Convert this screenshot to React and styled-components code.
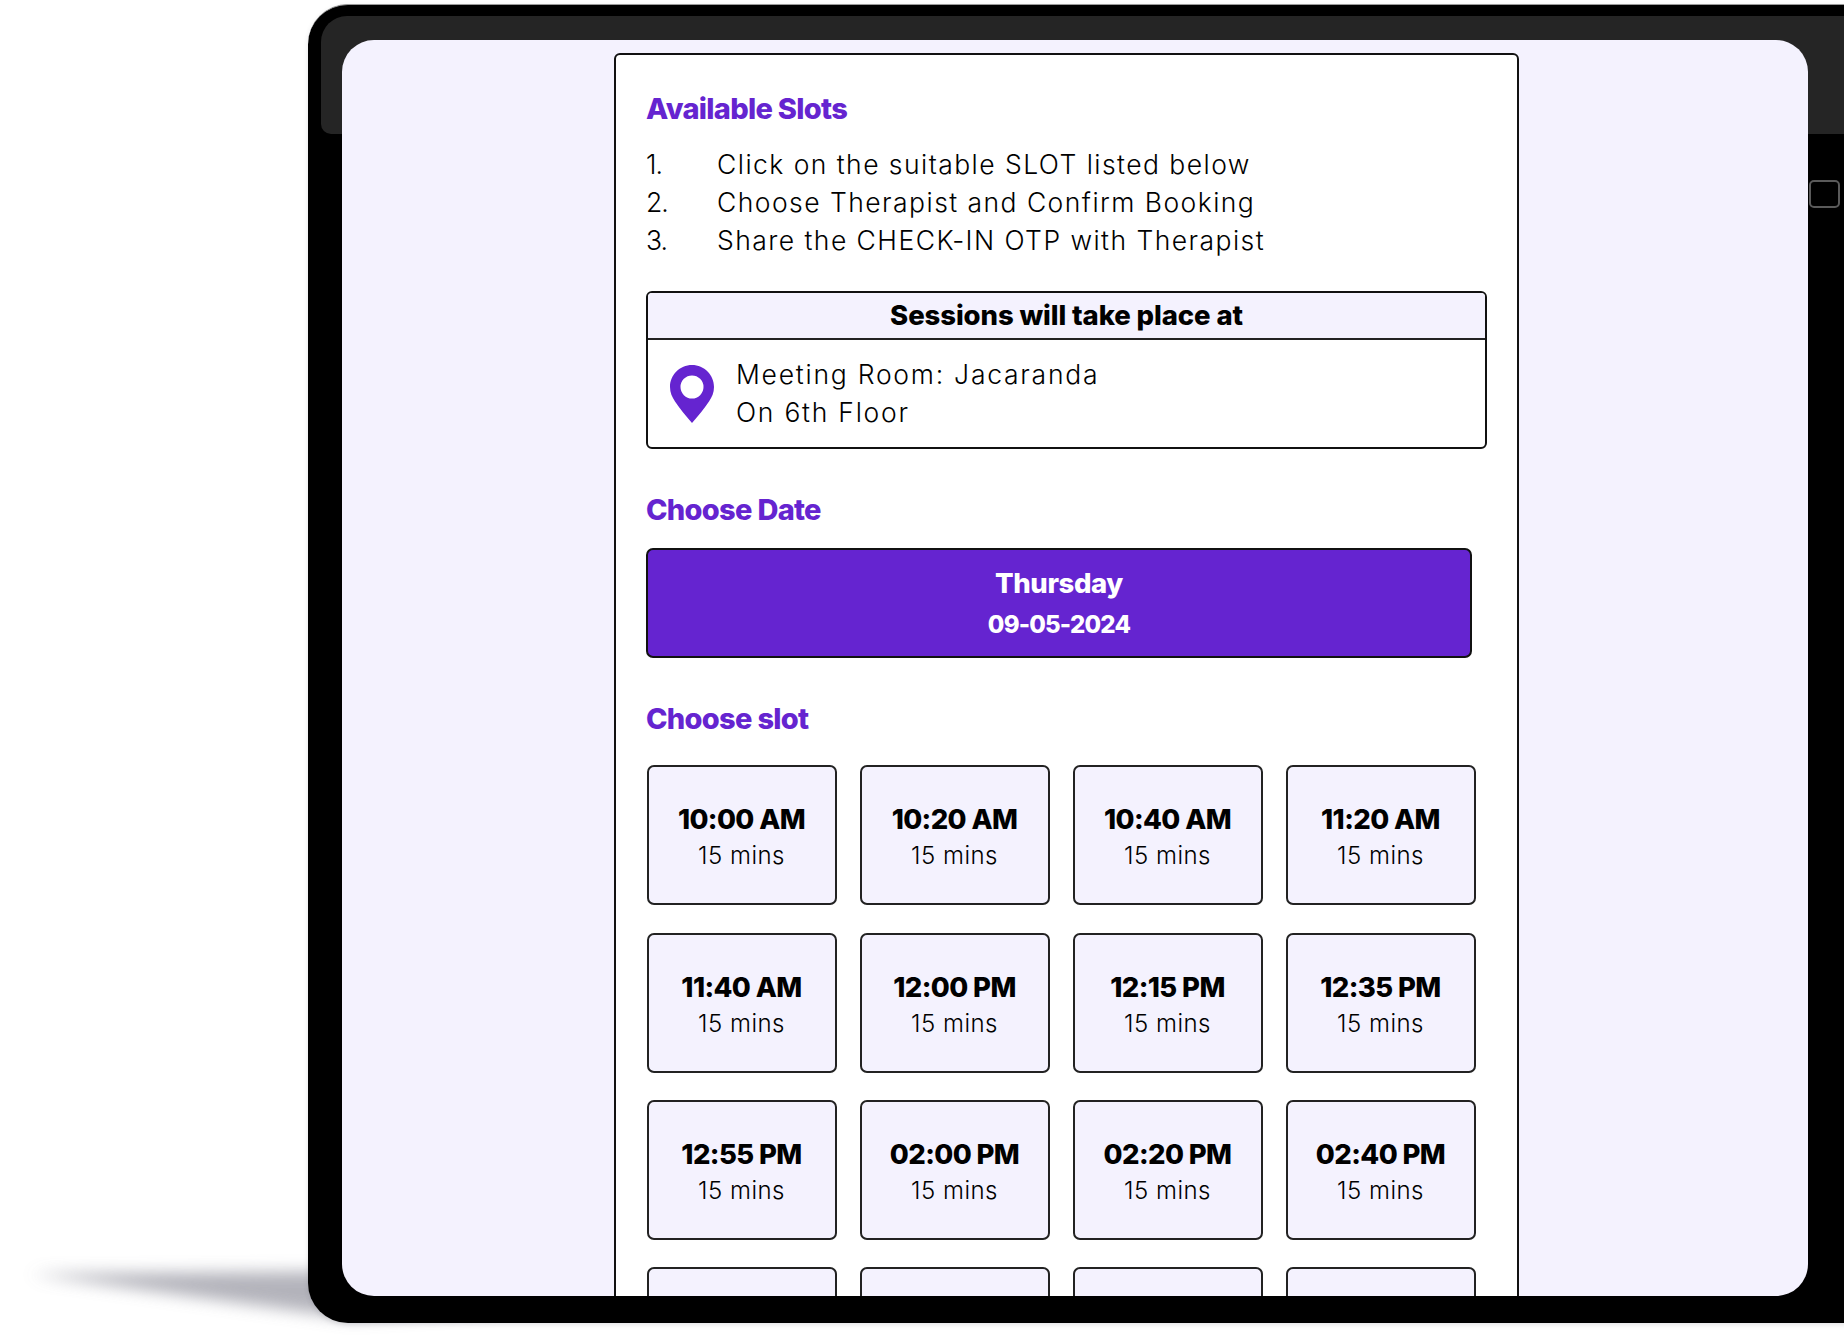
import React from 'react';
import styled, { createGlobalStyle } from 'styled-components';

const PURPLE = '#6524d0';
const TINT = '#f4f2fe';

const GlobalStyle = createGlobalStyle`
  html, body {
    margin: 0;
    padding: 0;
    background: #fff;
  }
  * { box-sizing: border-box; }
`;

const Page = styled.div`
  position: relative;
  width: 1844px;
  height: 1335px;
  overflow: hidden;
  padding: 4px 0 0 308px;
  background: #fff;
  font-family: "Inter", "Noto Sans", sans-serif;
  color: #000;
`;

const Shadow = styled.svg`
  position: absolute;
  left: 0;
  top: 1240px;
`;

const Device = styled.div`
  position: relative;
  width: 1600px;
  height: 1319px;
  padding: 35px 0 0 34px;
  background: #000;
  border-top: 1px solid #9a9a9a;
  border-radius: 40px;
  box-shadow: 0 2px 5px rgba(60, 60, 70, 0.14);
`;

const Glare = styled.div`
  position: absolute;
  left: 13px;
  top: 11px;
  right: 0;
  height: 118px;
  background: #252525;
  border-radius: 26px 0 0 10px;
`;

const Sensor = styled.div`
  position: absolute;
  left: 1501px;
  top: 175px;
  width: 31px;
  height: 28px;
  border: 2px solid #5a5a5a;
  border-radius: 5px;
`;

const Screen = styled.div`
  position: relative;
  width: 1466px;
  height: 1256px;
  overflow: hidden;
  padding: 13px 0 0 272px;
  background: ${TINT};
  border-radius: 32px;
`;

const Card = styled.div`
  width: 905px;
  padding: 36px 30px 0;
  background: #fff;
  border: 2px solid #111;
  border-radius: 6px;
`;

const Heading = styled.h2`
  margin: ${(p) => p.$top || 0}px 0 0;
  color: ${PURPLE};
  font-size: 29px;
  font-weight: 800;
  line-height: 36px;
  letter-spacing: -0.7px;
`;

const Steps = styled.ol`
  margin: 19px 0 0;
  padding: 0;
  list-style: none;
`;

const Step = styled.li`
  display: flex;
  font-size: 26.5px;
  font-weight: 300;
  line-height: 37.8px;
  letter-spacing: 1.45px;
`;

const StepNumber = styled.span`
  width: 71px;
  flex: none;
  letter-spacing: -1px;
`;

const VenueBox = styled.section`
  margin-top: 32px;
  border: 2px solid #111;
  border-radius: 6px;
  overflow: hidden;
`;

const VenueTitle = styled.div`
  height: 47px;
  background: ${TINT};
  border-bottom: 2px solid #222;
  font-size: 27.5px;
  font-weight: 800;
  line-height: 44px;
  letter-spacing: -0.1px;
  text-align: center;
`;

const VenueBody = styled.div`
  display: flex;
  align-items: center;
  gap: 22px;
  height: 107px;
  padding-left: 22px;
`;

const VenueText = styled.div`
  font-size: 26.5px;
  font-weight: 300;
  line-height: 37.6px;
  letter-spacing: 1.75px;
`;

const DateButton = styled.button`
  display: flex;
  flex-direction: column;
  align-items: center;
  width: 826px;
  height: 110px;
  margin-top: 20px;
  padding: 15px 0 0;
  background: ${PURPLE};
  border: 2px solid #111;
  border-radius: 7px;
  color: #fff;
  font-family: inherit;
`;

const DateDay = styled.span`
  font-size: 27.5px;
  font-weight: 800;
  line-height: 36px;
  letter-spacing: -0.4px;
`;

const DateValue = styled.span`
  margin-top: 7px;
  font-size: 24px;
  font-weight: 800;
  line-height: 34px;
  letter-spacing: -0.8px;
`;

const SlotGrid = styled.div`
  display: grid;
  grid-template-columns: repeat(4, 190px);
  grid-auto-rows: 140px;
  gap: 27.2px 23px;
  margin: 28px 0 0 0.5px;
`;

const Slot = styled.button`
  display: flex;
  flex-direction: column;
  align-items: center;
  padding: 34px 0 0;
  background: ${TINT};
  border: 2px solid #222;
  border-radius: 7px;
  color: #000;
  font-family: inherit;
`;

const SlotTime = styled.span`
  font-size: 27.5px;
  font-weight: 800;
  line-height: 36px;
  letter-spacing: -0.6px;
`;

const SlotLength = styled.span`
  margin-top: 1px;
  font-size: 24px;
  font-weight: 300;
  line-height: 36px;
  letter-spacing: 0.5px;
`;

const PinIcon = () => (
  <svg width="44" height="58" viewBox="0 0 44 58">
    <path
      fillRule="evenodd"
      fill={PURPLE}
      d="M22 0C9.8 0 0 9.8 0 22c0 5.5 2 10 5 14.5C10 44 16 51 22 58c6-7 12-14 17-21.500 3-4.500 5-9 5-14.500C44 9.800 34.200 0 22 0zm0 10.500a11.500 11.500 0 1 1 0 23 11.500 11.500 0 0 1 0-23z"
    />
  </svg>
);

const steps = [
  'Click on the suitable SLOT listed below',
  'Choose Therapist and Confirm Booking',
  'Share the CHECK-IN OTP with Therapist',
];

const slots = [
  '10:00 AM', '10:20 AM', '10:40 AM', '11:20 AM',
  '11:40 AM', '12:00 PM', '12:15 PM', '12:35 PM',
  '12:55 PM', '02:00 PM', '02:20 PM', '02:40 PM',
];

const App = () => (
  <Page>
    <GlobalStyle />
    <Shadow width="500" height="95" viewBox="0 0 500 95">
      <defs>
        <filter id="blur" x="-20%" y="-60%" width="140%" height="220%">
          <feGaussianBlur stdDeviation="8" />
        </filter>
      </defs>
      <path d="M30 34 L500 30 L500 70 L350 78 Z" fill="#9a9aa4" opacity="0.75" filter="url(#blur)" />
    </Shadow>
    <Device>
      <Glare />
      <Sensor />
      <Screen>
        <Card>
          <Heading>Available Slots</Heading>
          <Steps>
            {steps.map((step, i) => (
              <Step key={step}>
                <StepNumber>{i + 1}.</StepNumber>
                {step}
              </Step>
            ))}
          </Steps>
          <VenueBox>
            <VenueTitle>Sessions will take place at</VenueTitle>
            <VenueBody>
              <PinIcon />
              <VenueText>
                Meeting Room: Jacaranda
                <br />
                On 6th Floor
              </VenueText>
            </VenueBody>
          </VenueBox>
          <Heading $top={43}>Choose Date</Heading>
          <DateButton>
            <DateDay>Thursday</DateDay>
            <DateValue>09-05-2024</DateValue>
          </DateButton>
          <Heading $top={43}>Choose slot</Heading>
          <SlotGrid>
            {slots.map((time) => (
              <Slot key={time}>
                <SlotTime>{time}</SlotTime>
                <SlotLength>15 mins</SlotLength>
              </Slot>
            ))}
            {[0, 1, 2, 3].map((n) => (
              <Slot key={n} />
            ))}
          </SlotGrid>
        </Card>
      </Screen>
    </Device>
  </Page>
);

export default App;
